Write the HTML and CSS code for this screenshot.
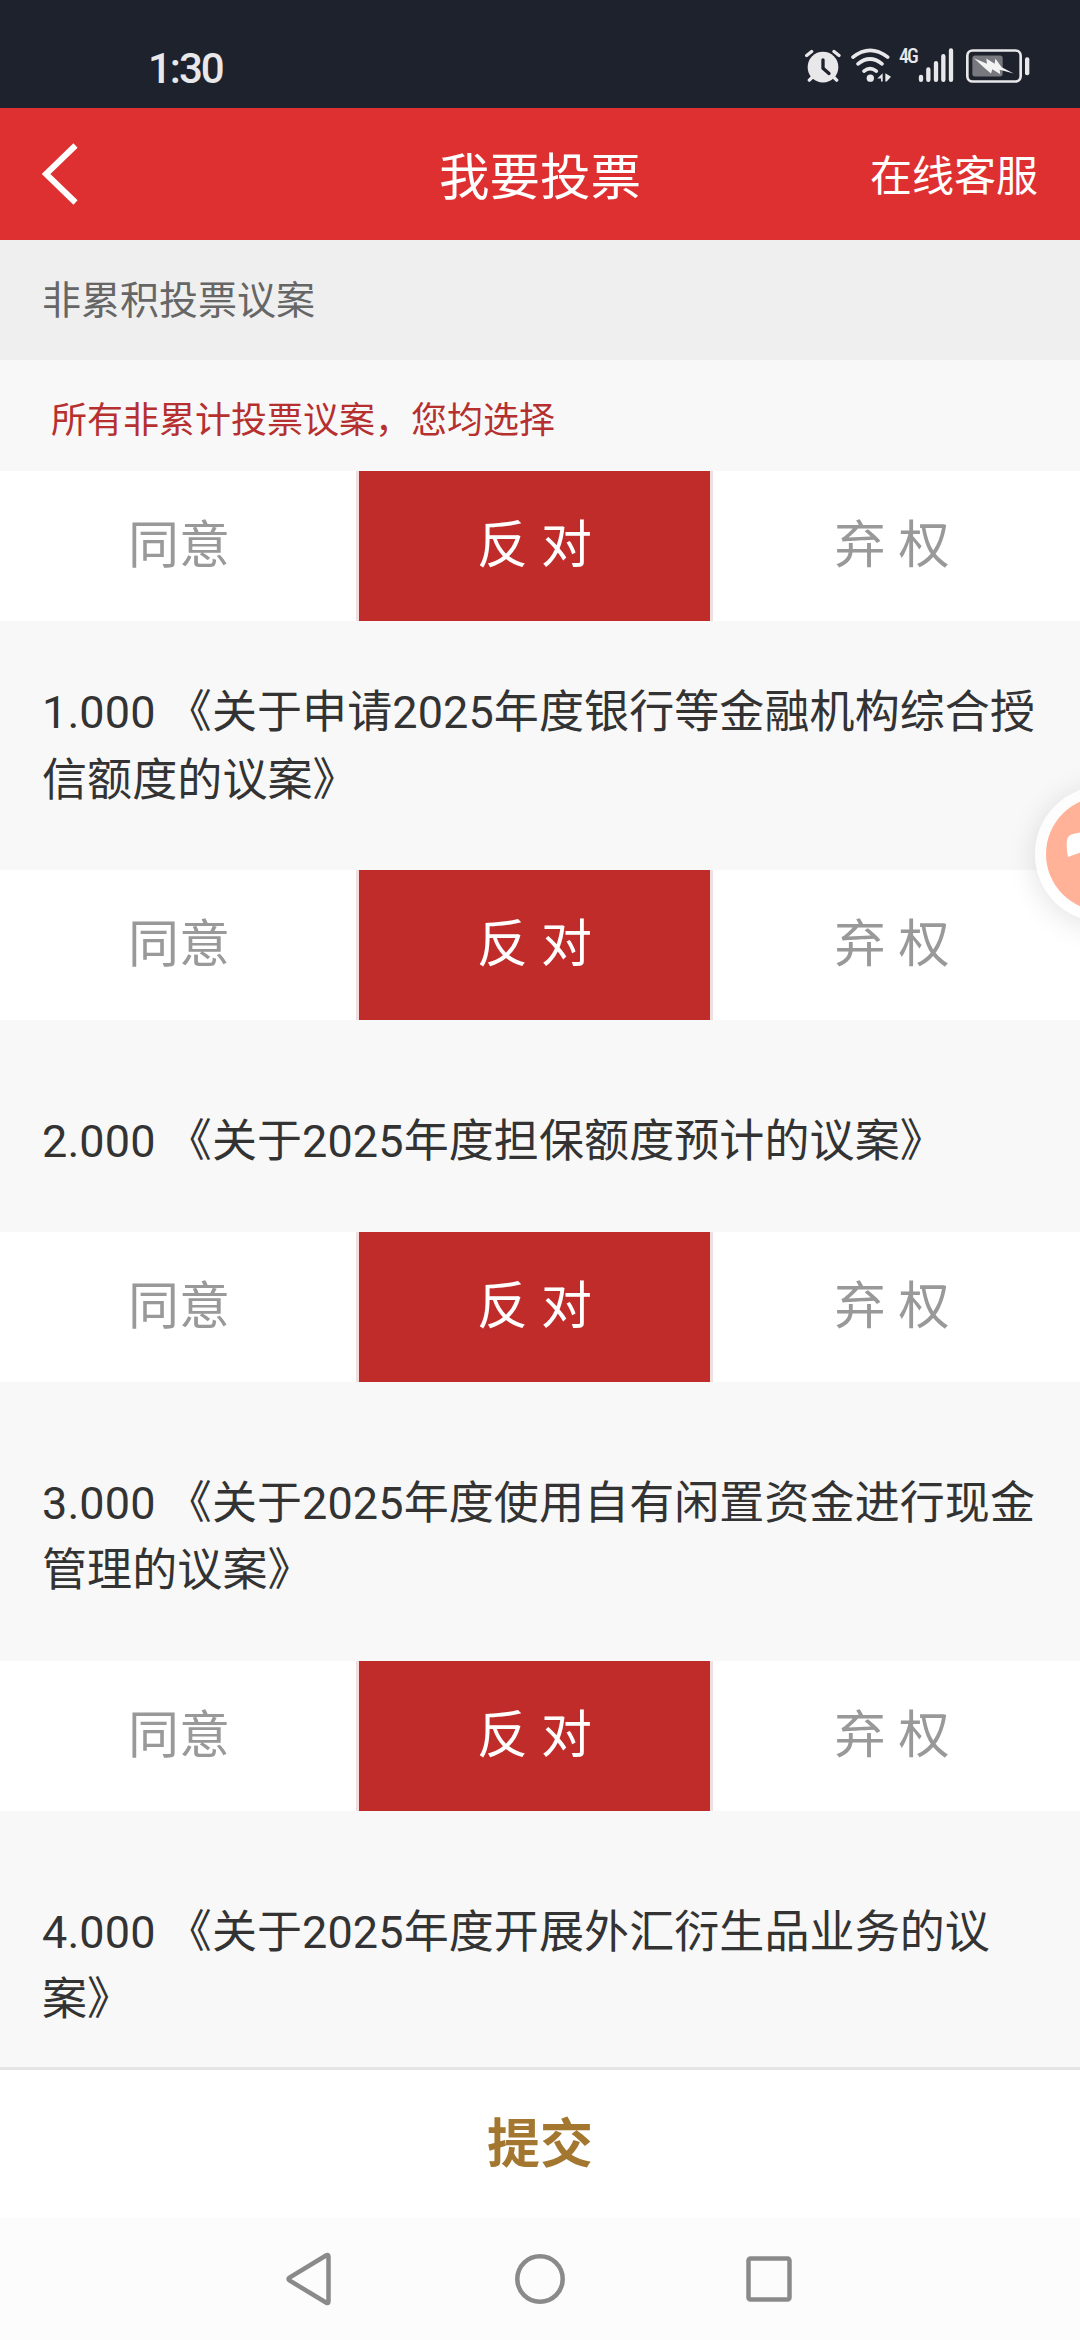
FILE: index.html
```html
<!DOCTYPE html>
<html lang="zh-CN">
<head>
    <meta charset="UTF-8">
    <meta name="viewport" content="width=device-width, initial-scale=1.0">
    <title>我要投票</title>
    <link rel="stylesheet" href="styles.css">
</head>
<body>
<div class="page">
    <div class="status-bar">
        <span class="time">1:30</span>
        <div class="status-icons">
            <svg class="alarm" viewBox="74 56 108 104">
                <circle cx="128" cy="113" r="46" fill="#e8e8ea"/>
                <path d="M79 78L94 66M161 66L176 78M98 141L87 152M158 141L169 152" fill="none" stroke="#e8e8ea" stroke-width="10" stroke-linecap="round"/>
                <path d="M128 91V116L146 132" fill="none" stroke="#1e222c" stroke-width="10" stroke-linecap="round" stroke-linejoin="round"/>
            </svg>
            <svg class="wifi" viewBox="208 56 126 104">
                <g fill="none" stroke="#e8e8ea" stroke-width="11" stroke-linecap="round">
                    <path d="M217 83Q268 42 321 83"/>
                    <path d="M232 103Q268 74 304 103"/>
                    <path d="M250 125Q268 110 287 125"/>
                </g>
                <circle cx="269" cy="146" r="11" fill="#e8e8ea"/>
                <path d="M306 131V156H301V147H290ZM314 131L331 142L318 156H314Z" fill="#e8e8ea"/>
            </svg>
            <span class="network">4G</span>
            <svg class="signal" viewBox="410 56 108 104">
                <path d="M419 142V151M441 120V151M464 101V151M486 80V151M509 63V151" fill="none" stroke="#e8e8ea" stroke-width="13" stroke-linecap="round"/>
            </svg>
            <svg class="battery" viewBox="554 56 192 104">
                <rect x="558" y="63" width="160" height="93" rx="16" fill="none" stroke="#e8e8ea" stroke-width="8"/>
                <rect x="573" y="78" width="91" height="63" rx="8" fill="#77797e"/>
                <rect x="731" y="83" width="13" height="54" rx="6" fill="#e8e8ea"/>
                <path d="M578 86L617 103L615 87L640 103L642 87L661 113L697 132L655 121L657 134L633 119L629 132L607 113Z" fill="#f3f3f3"/>
            </svg>
        </div>
    </div>

    <header class="header">
        <svg class="back" viewBox="0 0 36 62">
            <path d="M33.500 2.500L4 31L33.500 59.500" fill="none" stroke="#fff" stroke-width="6"/>
        </svg>
        <h1>我要投票</h1>
        <span class="service">在线客服</span>
    </header>

    <main class="content">
        <h2 class="section-title">非累积投票议案</h2>
        <p class="note">所有非累计投票议案，您均选择</p>
        <div class="options">
            <div class="option">同意</div>
            <div class="option active">反 对</div>
            <div class="option">弃 权</div>
        </div>

        <p class="proposal first">1.000 《关于申请2025年度银行等金融机构综合授信额度的议案》</p>
        <div class="options">
            <div class="option">同意</div>
            <div class="option active">反 对</div>
            <div class="option">弃 权</div>
        </div>

        <p class="proposal">2.000 《关于2025年度担保额度预计的议案》</p>
        <div class="options">
            <div class="option">同意</div>
            <div class="option active">反 对</div>
            <div class="option">弃 权</div>
        </div>

        <p class="proposal">3.000 《关于2025年度使用自有闲置资金进行现金管理的议案》</p>
        <div class="options">
            <div class="option">同意</div>
            <div class="option active">反 对</div>
            <div class="option">弃 权</div>
        </div>

        <p class="proposal">4.000 《关于2025年度开展外汇衍生品业务的议案》</p>
    </main>

    <div class="submit">提交</div>

    <nav class="nav-bar">
        <svg viewBox="0 0 60 60">
            <path d="M47.500 7.500V52.500Q47.500 55 45 53.500L8.500 31.500Q6.500 30 8.500 28.500L45 6.500Q47.500 5 47.500 7.500Z"/>
        </svg>
        <svg viewBox="0 0 60 60">
            <circle cx="30" cy="30" r="22.700"/>
        </svg>
        <svg viewBox="0 0 60 60">
            <rect x="9.500" y="9.500" width="41" height="41" rx="2"/>
        </svg>
    </nav>

    <div class="float-btn">
        <svg viewBox="0 0 114 114">
            <circle cx="57" cy="57" r="57" fill="#ffb297"/>
            <path d="M21 43Q22 38 27 37Q57 30 87 37Q92 38 93 43V60Q57 45 22 60Q20 51 21 43Z" fill="#fff"/>
        </svg>
    </div>
</div>
</body>
</html>
```

FILE: styles.css
```css
* {
    box-sizing: border-box;
    margin: 0;
    padding: 0;
}

body {
    font-family: "Noto Sans CJK SC", sans-serif;
    background-color: #f8f8f8;
    color: #333;
}

svg {
    display: block;
}

.page {
    position: relative;
    display: flex;
    flex-direction: column;
    width: 100%;
    height: 2340px;
    overflow: hidden;
    contain: paint;
}

/* status bar */
.status-bar {
    display: flex;
    justify-content: space-between;
    height: 108px;
    padding: 0 50px 0 148px;
    background-color: #1e222c;
    color: #e8e8ea;
}

.time {
    padding-top: 39px;
    font-family: "Roboto", sans-serif;
    font-size: 42px;
    line-height: 60px;
    font-weight: 500;
    letter-spacing: -2px;
}

.status-icons {
    display: flex;
    padding-top: 48px;
}

.status-icons svg {
    height: 35px;
}

.alarm {
    width: 36px;
    margin-right: 9px;
}

.wifi {
    width: 42px;
    margin-right: 7px;
}

.network {
    width: 19px;
    font-family: "Roboto", sans-serif;
    font-stretch: condensed;
    font-size: 20px;
    line-height: 16px;
    font-weight: 500;
    letter-spacing: -2px;
}

.signal {
    width: 36px;
    margin-right: 12px;
}

.battery {
    width: 64px;
}

/* header */
.header {
    display: grid;
    grid-template-columns: 1fr auto 1fr;
    align-items: center;
    height: 132px;
    padding: 0 42px 3px;
    background-color: #df3031;
    color: #fff;
}

.back {
    width: 36px;
    height: 62px;
    margin-top: 3px;
}

.header h1 {
    font-size: 50.5px;
    font-weight: 400;
}

.service {
    justify-self: end;
    font-size: 42px;
}

/* content */
.content {
    flex: 1;
    overflow: hidden;
}

.section-title {
    height: 120px;
    padding-left: 42px;
    background-color: #efefef;
    color: #666;
    font-size: 39px;
    font-weight: 400;
    line-height: 114px;
}

.note {
    height: 111px;
    padding-left: 51px;
    color: #b5302f;
    font-size: 36px;
    line-height: 115px;
}

.options {
    display: grid;
    grid-template-columns: 359px 354px 356px;
    height: 150px;
    background-color: #fff;
}

.option {
    padding-left: 2px;
    border-right: 3px solid #f1dfdf;
    color: #999;
    font-size: 51px;
    line-height: 141px;
    text-align: center;
    word-spacing: 1.5px;
}

.option:last-child {
    border-right: none;
}

.option.active {
    padding-left: 0;
    background-color: #bf2c2a;
    background-clip: padding-box;
    color: #fff;
}

.proposal {
    padding: 88px 40px 56px 42px;
    font-family: "Roboto", "Noto Sans CJK SC", sans-serif;
    font-size: 45px;
    line-height: 67.5px;
    letter-spacing: 0.1px;
}

.proposal.first {
    padding-top: 58px;
}

/* bottom */
.submit {
    height: 151px;
    border-top: 3px solid #e5e5e5;
    background-color: #fff;
    color: #a37730;
    font-size: 53px;
    font-weight: 700;
    line-height: 141px;
    text-align: center;
}

.nav-bar {
    display: flex;
    justify-content: center;
    align-items: center;
    gap: 169px;
    height: 122px;
    background-color: #fcfcfc;
}

.nav-bar svg {
    width: 60px;
    height: 60px;
    fill: none;
    stroke: #8a8a8a;
    stroke-width: 4.5;
}

.float-btn {
    position: absolute;
    top: 786px;
    left: 1035px;
    width: 136px;
    height: 136px;
    padding: 11px;
    border-radius: 50%;
    background-color: rgba(255, 255, 255, 0.7);
    box-shadow: 0 4px 30px rgba(0, 0, 0, 0.12);
}
```
